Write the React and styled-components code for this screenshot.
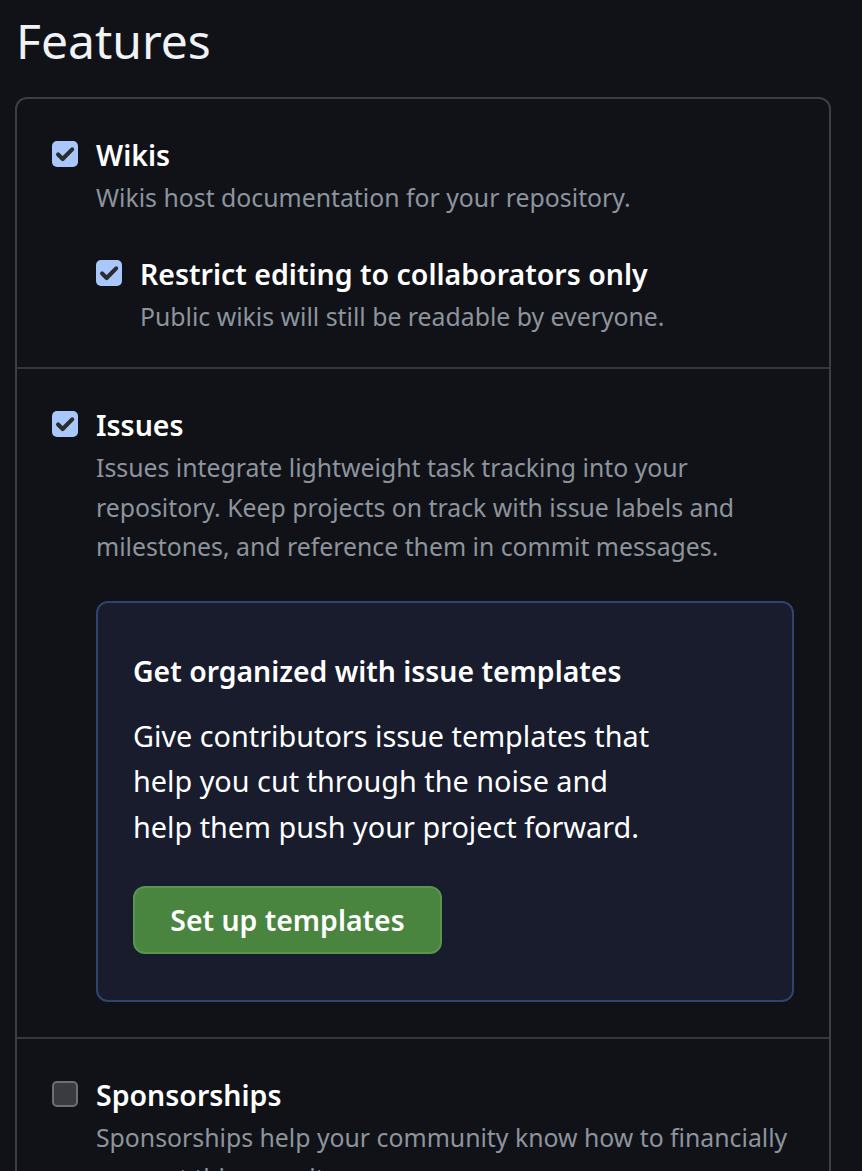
import React from 'react'
import { styled, createGlobalStyle } from 'styled-components'

const Global = createGlobalStyle`
  html, body {
    margin: 0;
    background: #101217;
  }
  body {
    font-family: "Noto Sans", "Open Sans", sans-serif;
    color: #f0f3f6;
  }
`

const Page = styled.div`
  padding: 0 31px 0 15px;
  background: #101217;
  min-height: 1171px;
`

const Heading = styled.h2`
  margin: 0;
  padding: 10px 0 0 1px;
  height: 97px;
  box-sizing: border-box;
  font-size: 48px;
  line-height: 62px;
  font-weight: 400;
  color: #f0f3f6;
`

const Box = styled.div`
  border: 2px solid #3a3f47;
  border-radius: 12px;
  width: 816px;
  box-sizing: border-box;
`

const Section = styled.div`
  padding: ${p => p.$pt || 36}px 35px ${p => p.$pb || 31}px 35px;
  border-top: ${p => (p.$first ? 'none' : '2px solid #33383f')};
`

const Row = styled.div`
  display: flex;
  gap: 18px;
  margin-top: ${p => p.$mt || 0}px;
  margin-left: ${p => p.$indent || 0}px;
`

const Box26 = styled.span`
  flex: none;
  width: 26px;
  height: 26px;
  margin-top: 6px;
  border-radius: 5px;
  box-sizing: border-box;
  display: flex;
  align-items: center;
  justify-content: center;
  background: ${p => (p.$on ? '#a9c7fb' : '#3a3b40')};
  border: ${p => (p.$on ? 'none' : '2px solid #6b6f76')};
`

const Content = styled.div`
  flex: 1;
  min-width: 0;
`

const Label = styled.div`
  font-size: 28.5px;
  line-height: 40px;
  font-weight: 600;
  color: #ffffff;
`

const Note = styled.p`
  margin: 3px 0 0;
  font-size: 24.8px;
  line-height: 39.5px;
  color: #8d949d;
`

const Promo = styled.div`
  margin-top: 34px;
  border: 2px solid #30436f;
  border-radius: 12px;
  background: #181c2c;
  padding: 48px 35px 46px;
`

const PromoTitle = styled.h3`
  margin: 0;
  font-size: 28.4px;
  line-height: 40px;
  font-weight: 600;
  color: #ffffff;
`

const PromoText = styled.p`
  margin: 22px 0 0;
  max-width: 530px;
  font-size: 28.8px;
  line-height: 45.5px;
  color: #ffffff;
`

const Button = styled.button`
  display: block;
  margin-top: 37px;
  height: 68px;
  width: 309px;
  padding: 0;
  border-radius: 12px;
  border: 2px solid #5a9550;
  background: #4a853f;
  color: #ffffff;
  font-family: inherit;
  font-size: 28.4px;
  font-weight: 600;
  cursor: pointer;
`

function Check({ on }) {
  return (
    <Box26 $on={on}>
      {on && (
        <svg width="22" height="22" viewBox="0 0 16 16">
          <path
            d="M3 8.4 L6.3 11.6 L13.2 4.6"
            fill="none"
            stroke="#2b2c30"
            strokeWidth="3"
            strokeLinecap="round"
            strokeLinejoin="round"
          />
        </svg>
      )}
    </Box26>
  )
}

function Option({ on, label, children, mt, indent, extra }) {
  return (
    <Row $mt={mt} $indent={indent}>
      <Check on={on} />
      <Content>
        <Label>{label}</Label>
        <Note>{children}</Note>
        {extra}
      </Content>
    </Row>
  )
}

export default function App() {
  return (
    <Page>
      <Global />
      <Heading>Features</Heading>
      <Box>
        <Section $first>
          <Option on label="Wikis">
            Wikis host documentation for your repository.
          </Option>
          <Option on mt={36} indent={44} label="Restrict editing to collaborators only">
            Public wikis will still be readable by everyone.
          </Option>
        </Section>
        <Section $pb={35}>
          <Option
            on
            label="Issues"
            extra={
              <Promo>
                <PromoTitle>Get organized with issue templates</PromoTitle>
                <PromoText>
                  Give contributors issue templates that help you cut through
                  the noise and help them push your project forward.
                </PromoText>
                <Button>Set up templates</Button>
              </Promo>
            }
          >
            Issues integrate lightweight task tracking into your repository.
            Keep projects on track with issue labels and milestones, and
            reference them in commit messages.
          </Option>
        </Section>
        <Section>
          <Option label="Sponsorships">
            Sponsorships help your community know how to financially support
            this repository.
          </Option>
        </Section>
      </Box>
    </Page>
  )
}
